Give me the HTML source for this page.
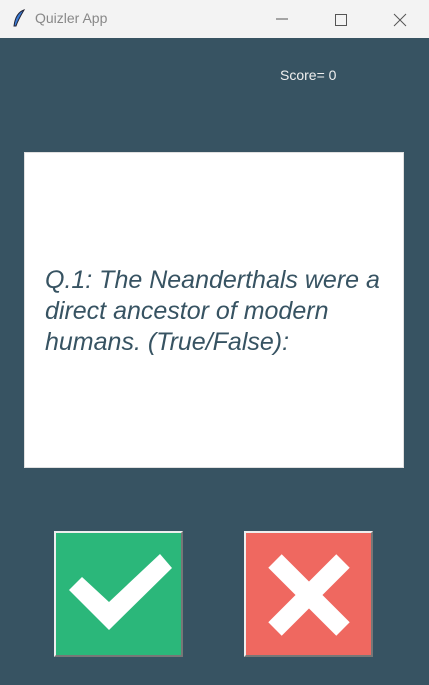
<!DOCTYPE html>
<html><head><style>
*{margin:0;padding:0;box-sizing:border-box}
body{width:429px;height:685px;background:#375362;position:relative;overflow:hidden;font-family:"Liberation Sans",sans-serif}
.tb{position:absolute;left:0;top:0;width:429px;height:38px;background:#f3f3f3}
.tb .t{position:absolute;left:35px;top:10px;font-size:14px;color:#888}
.score{position:absolute;left:280px;top:67px;font-size:14px;color:#f0f0f0}
.card{position:absolute;left:24px;top:152px;width:380px;height:316px;background:#fff;border:1px solid #e0e0e0}
.q{position:absolute;left:20px;top:112px;width:360px;font-size:25px;line-height:31px;font-style:italic;color:#375362}
.btn{position:absolute;top:531px;width:129px;height:126px;border:2px solid;border-color:#eee #777 #777 #eee}
</style></head><body>
<div class="tb">
<svg style="position:absolute;left:12px;top:9px" width="14" height="20" viewBox="0 0 14 20"><path d="M12 1 C6 3 3 9 2 17 L4 17 C6 11 9 6 12 1Z" fill="#3a7bd5" stroke="#223" stroke-width="1"/></svg>
<div class="t">Quizler App</div>
<svg style="position:absolute;left:276px;top:12px" width="140" height="16"><line x1="0" y1="7" x2="12" y2="7" stroke="#555"/><rect x="59.5" y="2.5" width="11" height="11" fill="none" stroke="#555"/><path d="M118 2 L130 14 M130 2 L118 14" stroke="#555"/></svg>
</div>
<div class="score">Score= 0</div>
<div class="card"><div class="q">Q.1: The Neanderthals were a direct ancestor of modern humans. (True/False):</div></div>
<div class="btn" style="left:54px;background:#2bb77a"></div>
<div class="btn" style="left:244px;background:#ef6860"></div>
<svg style="position:absolute;left:0;top:0" width="429" height="685">
<polygon points="69,590 82,577 109,602 160,554 172,568 109,630" fill="#fff"/>
<path d="M275 561 L343 629 M343 561 L275 629" stroke="#fff" stroke-width="19"/>
</svg>
</body></html>
